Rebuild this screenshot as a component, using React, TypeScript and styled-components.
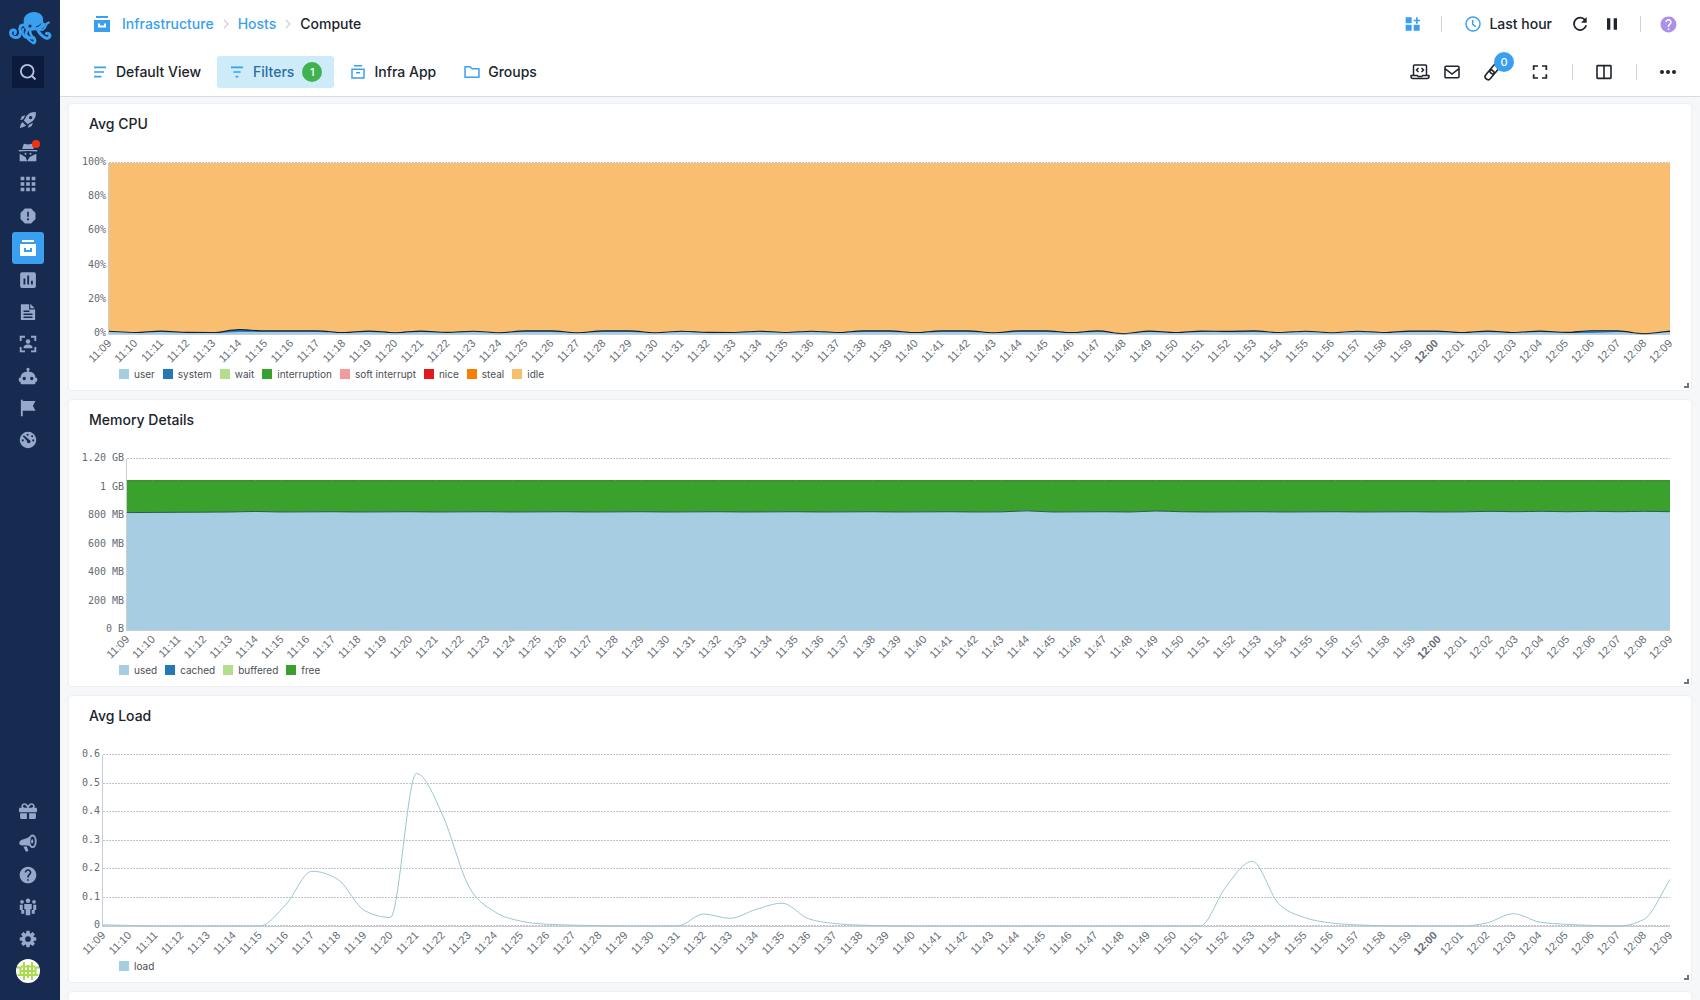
import React, { useLayoutEffect, useRef, useState } from "react";
import styled, { createGlobalStyle, css } from "styled-components";
import { MdApps, MdHelp, MdReport, MdPause } from "react-icons/md";
import { FaGift } from "react-icons/fa";

const color = {
  navy: "#172b50",
  navyDark: "#0c1b3d",
  navIcon: "#97a8cc",
  blue: "#3a9fef",
  page: "#f5f7f9",
  text: "#20242b",
  muted: "#656b75",
  line: "#d8dbdf",
};

const GlobalStyle = createGlobalStyle`
  * { box-sizing: border-box; }
  body {
    margin: 0;
    background: ${color.page};
    color: ${color.text};
    font-family: Inter, "Liberation Sans", sans-serif;
    font-size: 14px;
    line-height: 16px;
  }
  button { font: inherit; color: inherit; border: 0; background: none; padding: 0; cursor: pointer; }
  a { color: inherit; text-decoration: none; }
`;

const Shell = styled.div`
  display: flex;
  height: 100vh;
  overflow: hidden;
`;

const Sidebar = styled.nav`
  display: flex;
  flex-direction: column;
  flex: none;
  width: 60px;
  padding: 12px 16px 13px 12px;
  background: ${color.navy};
`;

const LogoLink = styled.a`
  display: block;
  height: 32px;
  margin: 0 -8px 12px -4px;
`;

const SearchButton = styled.button`
  display: grid;
  place-items: center;
  flex: none;
  height: 32px;
  margin-bottom: 16px;
  background: ${color.navyDark};
  color: #b4c0dc;
`;

const NavLink = styled.a<{ $active?: boolean }>`
  position: relative;
  display: grid;
  place-items: center;
  flex: none;
  height: 32px;
  border-radius: 3px;
  color: ${(p) => (p.$active ? "#fff" : color.navIcon)};
  background: ${(p) => (p.$active ? color.blue : "transparent")};
`;

const AlertDot = styled.span`
  position: absolute;
  top: 4px;
  right: 4px;
  width: 8px;
  height: 8px;
  border-radius: 50%;
  background: #f0320f;
`;

const Spacer = styled.div`
  flex: 1;
`;

const Main = styled.div`
  display: flex;
  flex-direction: column;
  flex: 1;
  min-width: 0;
`;

const Header = styled.header`
  flex: none;
  background: #fff;
  border-bottom: 1px solid ${color.line};
`;

const Bar = styled.div`
  display: flex;
  align-items: center;
  height: 48px;
  padding: 0 16px 0 20px;
`;

const Breadcrumb = styled.div`
  display: flex;
  align-items: center;
  gap: 8px;
  padding-left: 14px;
  font-weight: 500;
`;

const CrumbIcon = styled.span`
  display: flex;
  margin-right: 4px;
  color: ${color.blue};
`;

const Crumb = styled.a`
  color: ${color.blue};
`;

const Chevron = styled.svg`
  width: 8px;
  height: 16px;
  fill: none;
  stroke: #cfd3d9;
  stroke-width: 1.4;
`;

const Tabs = styled.div`
  display: flex;
  gap: 4px;
`;

const TextButton = styled.button<{ $on?: boolean }>`
  display: flex;
  align-items: center;
  gap: 8px;
  height: 32px;
  padding: 0 12px;
  border-radius: 3px;
  font-weight: 500;
  svg { color: ${color.blue}; }
  ${(p) =>
    p.$on &&
    css`
      background: #cdebf8;
      color: #2c6da6;
    `}
`;

const countBadge = css`
  display: grid;
  place-items: center;
  width: 20px;
  height: 20px;
  border-radius: 50%;
  color: #fff;
  font-size: 11px;
  font-weight: 500;
`;

const Count = styled.span`
  ${countBadge}
  background: #3fb34f;
`;

const LinkCount = styled.span`
  ${countBadge}
  position: absolute;
  left: 18px;
  top: -4px;
  background: ${color.blue};
`;

const Actions = styled.div`
  display: flex;
  align-items: center;
  margin-left: auto;
`;

const IconButton = styled.button<{ $tint?: string; $spaced?: boolean }>`
  position: relative;
  display: grid;
  place-items: center;
  width: 32px;
  height: 32px;
  color: ${(p) => p.$tint ?? color.text};
  margin: ${(p) => (p.$spaced ? "0 16px 0 8px" : "0")};
`;

const Divider = styled.span<{ $wide?: boolean }>`
  width: 1px;
  height: 16px;
  margin: 0 ${(p) => (p.$wide ? 15 : 11)}px 0 ${(p) => (p.$wide ? 16 : 12)}px;
  background: #cfd2d6;
`;

const Panels = styled.main`
  display: flex;
  flex-direction: column;
  flex: 1;
  min-height: 0;
  gap: 10px;
  padding: 7px 9px 0;
  overflow: hidden;
`;

const Card = styled.section`
  position: relative;
  flex: none;
  min-height: 286px;
  background: #fff;
  border-radius: 3px;
  box-shadow: 0 0 2px rgba(30, 50, 80, 0.12);
`;

const CardTitle = styled.h2`
  margin: 0;
  padding: 0 20px;
  font-size: 14px;
  font-weight: 500;
  line-height: 40px;
`;

const ChartSvg = styled.svg`
  display: block;
  width: 100%;
  height: 223px;
`;

const YLabel = styled.text`
  fill: ${color.muted};
  font-family: "DejaVu Sans Mono", monospace;
  font-size: 10px;
  text-anchor: end;
`;

const XLabel = styled.text<{ $bold: boolean }>`
  fill: ${color.muted};
  font-family: "Liberation Sans", Arial, sans-serif;
  font-size: 11px;
  font-weight: ${(p) => (p.$bold ? 700 : 400)};
  text-anchor: end;
`;

const Legend = styled.ul`
  display: flex;
  gap: 8px;
  margin: 0;
  padding: 0 50px;
  list-style: none;
  font-size: 10px;
  line-height: 14px;
  color: #4a4e55;
`;

const LegendItem = styled.li<{ $color: string }>`
  display: flex;
  align-items: center;
  gap: 5px;
  &::before {
    content: "";
    width: 10px;
    height: 10px;
    background: ${(p) => p.$color};
  }
`;

const ResizeHandle = styled.span`
  position: absolute;
  right: 2px;
  bottom: 2px;
  width: 5px;
  height: 5px;
  border: solid #6e747c;
  border-width: 0 2px 2px 0;
`;

/* ---------- icons ---------- */

type IconProps = { size?: number; children: React.ReactNode; stroke?: number };

const Solid = ({ size = 18, children }: IconProps) => (
  <svg width={size} height={size} viewBox="0 0 24 24" fill="currentColor" aria-hidden="true">
    {children}
  </svg>
);

const Outline = ({ size = 18, stroke = 2, children }: IconProps) => (
  <svg width={size} height={size} viewBox="0 0 24 24" fill="none" stroke="currentColor" strokeWidth={stroke} aria-hidden="true">
    {children}
  </svg>
);

const OctopusLogo = () => (
  <svg width="44" height="34" viewBox="0 0 44 34" aria-hidden="true">
    <g fill="none" stroke={color.blue} strokeLinecap="round">
      <path strokeWidth="3" d="M19 13 Q15 12 12.500 14 Q11 17 12.500 20 Q12.500 26 7 25.500 Q2.500 24.500 2.500 20.500 Q3 17.500 6 18 Q8.500 19 7 21.500" />
      <path strokeWidth="2.800" d="M22 16 Q17 20 18 23 Q20 27 26 26 Q28 29 26 31" />
      <path strokeWidth="2.600" d="M22 17 Q22 24 26 26" />
      <path strokeWidth="3" d="M29 16 Q31 22 36 25 Q40 28 42 24 Q41.500 20.500 38.500 21.500" />
      <path strokeWidth="2" d="M30 17 Q36 20 38 13.500 Q38.500 11 41 10.500" />
      <path strokeWidth="2.200" d="M15 17 Q13 24 19 26 Q21 29 25 31" />
    </g>
    <path fill={color.blue} d="M16 12 C14 4 20 0 26 0 C32 0 36 4 35 9 Q35 12 38 11 Q37 17 30 18 L20 19 Q15 17 16 12Z" />
    <circle cx="22" cy="14" r="1.600" fill={color.navy} />
    <path d="M28 15 Q32 14 33 11.500" stroke={color.navy} fill="none" />
  </svg>
);

const RocketIcon = () => (
  <Solid>
    <path fillRule="evenodd" d="M22.500 1.500Q15 1 10.500 6L6.500 12.500 11.500 17.500 18 13.500Q23 9 22.500 1.500zM15.500 6.500a2.300 2.300 0 1 1 0 4.600a2.300 2.300 0 0 1 0-4.600z" />
    <path d="M8.500 5.500L4 7 1.500 12l4-1zM18.500 15.500L17 20 12 22.500l1-4z" />
    <path d="M4.500 14.500l5 5-3 1.500-5.500 2 1.500-5.500z" />
  </Solid>
);

const ArchiveSolid = ({ size = 24 }: { size?: number }) => (
  <svg width={size} height={size} viewBox="0 0 24 24" fill="currentColor" aria-hidden="true">
    <path d="M6 4h12v2H6z" />
    <path fillRule="evenodd" d="M4 8h16v12H4zM8 12v4h8v-4h-2v2h-4v-2z" />
  </svg>
);

const ArchiveOutline = () => (
  <Outline size={16} stroke={2.2}>
    <path d="M6 2.500h12M3 8h18v13H3zM9 13h6" />
  </Outline>
);

const SpyIcon = () => (
  <Solid size={20}>
    <path d="M7 2l5 1 5-1 2 6.500H5zM1 9.500h22v2q-11-1.500-22 0z" />
    <circle cx="9" cy="14" r="1.200" />
    <circle cx="15" cy="14" r="1.200" />
    <path d="M2 14l7 4 2 5H2zM22 14l-8 4-3 5h11z" />
  </Solid>
);

const PollIcon = () => (
  <Solid>
    <path fillRule="evenodd" d="M4 1.500h16a2.500 2.500 0 0 1 2.500 2.500v16a2.500 2.500 0 0 1-2.500 2.500H4A2.500 2.500 0 0 1 1.500 20V4A2.500 2.500 0 0 1 4 1.500zM6 10v8h2.500v-8zM11 6v12h2.500V6zM16 13v5h2.500v-5z" />
  </Solid>
);

const DocumentIcon = () => (
  <Solid>
    <path fillRule="evenodd" d="M2.500 1.500h11v7h8v14h-19zM6 10v2h8v-2zM6 14v2h12v-2zM6 18v2h12v-2z" />
    <path d="M15 1l6 6h-6z" />
  </Solid>
);

const ScanUserIcon = () => (
  <Solid>
    <path d="M1 1h7v2.500H3.500V8H1zM16 1h7v7h-2.500V3.500H16zM1 16h2.500v4.500H8V23H1zM20.500 16H23v7h-7v-2.500h4.500z" />
    <circle cx="12" cy="8.500" r="3" />
    <path d="M6 17.500q0-5 6-5t6 5z" />
  </Solid>
);

const RobotIcon = () => (
  <Solid size={20}>
    <path d="M12,2A2,2 0 0,1 14,4C14,4.740 13.600,5.390 13,5.730V7H14A7,7 0 0,1 21,14H22A1,1 0 0,1 23,15V18A1,1 0 0,1 22,19H21V20A2,2 0 0,1 19,22H5A2,2 0 0,1 3,20V19H2A1,1 0 0,1 1,18V15A1,1 0 0,1 2,14H3A7,7 0 0,1 10,7H11V5.730C10.400,5.390 10,4.740 10,4A2,2 0 0,1 12,2M7.500,13A2,2 0 0,0 5.500,15A2,2 0 0,0 9.500,15A2,2 0 0,0 7.500,13M16.500,13A2,2 0 0,0 14.500,15A2,2 0 0,0 18.500,15A2,2 0 0,0 16.500,13Z" />
  </Solid>
);

const FlagIcon = () => (
  <Solid>
    <path d="M2.500 1h2.500v1.500h17l-3.500 6.500 3.500 6.500H5V23H2.500z" />
  </Solid>
);

const GaugeIcon = () => (
  <Solid>
    <circle cx="12" cy="12" r="11" />
    <g fill={color.navy}>
      <circle cx="5" cy="12.500" r="1.400" />
      <circle cx="11.500" cy="5" r="1.400" />
      <circle cx="17.500" cy="7" r="1.400" />
      <circle cx="19" cy="12.500" r="1.400" />
      <circle cx="13" cy="14" r="2.400" />
      <path d="M5 7l1.500-1.500 7.500 6.500-2 2.500z" />
    </g>
  </Solid>
);

const MegaphoneIcon = () => (
  <Solid size={20}>
    <path d="M16 3Q11 7 4 8.500Q1 10 1.500 13q1 2.500 4 2Q12 14 17.500 17z" />
    <path d="M6.500 16.500l4-.5 2 5.500-3 1z" />
    <ellipse cx="17.500" cy="10" rx="3.800" ry="7" fill={color.navy} stroke="currentColor" strokeWidth="2.200" />
    <ellipse cx="17" cy="10" rx="1.300" ry="2.600" />
  </Solid>
);

const TeamIcon = () => (
  <Solid>
    <circle cx="12" cy="3.500" r="3" />
    <circle cx="4" cy="5" r="2.500" />
    <circle cx="20" cy="5" r="2.500" />
    <path d="M7 8h10v7h-2v8H9v-8H7zM1 9h4v7h2v5H3v-5H1zM19 9h4v7h-2v5h-4v-5h2z" />
  </Solid>
);

const GearIcon = () => (
  <Solid>
    {[0, 45, 90, 135].map((angle) => (
      <path key={angle} d="M10 1h4l1 5H9zM10 23h4l1-5H9z" transform={`rotate(${angle} 12 12)`} />
    ))}
    <circle cx="12" cy="12" r="5.800" fill="none" stroke="currentColor" strokeWidth="4" />
  </Solid>
);

const Avatar = () => (
  <svg width="24" height="24" viewBox="0 0 24 24" aria-hidden="true">
    <circle cx="12" cy="12" r="12" fill="#fff" />
    <path
      d="M8 3v18M12 6v13M16 3v18M4.500 8v8M19.500 8v8M1 8.500h4M19 8.500h4M5 7.500h14M5 12h14M5 16h14M1.500 16h4M18.500 16h4"
      fill="none"
      stroke="#a9dc4b"
      strokeWidth="2"
    />
  </svg>
);

const SearchIcon = () => (
  <Outline size={18} stroke={2.4}>
    <circle cx="11" cy="11" r="8.500" />
    <path d="M17 17l5 5" />
  </Outline>
);

const LinesIcon = () => (
  <Outline size={16} stroke={2.6}>
    <path d="M3 5h18M3 12h15M3 19h11" />
  </Outline>
);

const FilterIcon = () => (
  <Outline size={16} stroke={2.6}>
    <path d="M3 5h18M6.500 12h11M10 19h4" />
  </Outline>
);

const FolderIcon = () => (
  <Outline size={16} stroke={2.2}>
    <path d="M1.500 4h7.500l3 3h10.500v13h-21z" strokeLinejoin="round" />
  </Outline>
);

const WidgetsIcon = () => (
  <Solid size={16}>
    <path d="M1 2h9v9H1zM1 13h9v9H1zM13 13h9v9h-9zM16.500 2h2.500v3.500h3.500V8H19v3.500h-2.500V8H13V5.500h3.500z" />
  </Solid>
);

const ClockIcon = () => (
  <Outline size={16} stroke={2.2}>
    <circle cx="12" cy="12" r="10.500" />
    <path d="M11.500 5.500v7l4.500 3.500" />
  </Outline>
);

const RefreshIcon = () => (
  <Outline size={16} stroke={2.6}>
    <path d="M20 6.500A9.300 9.300 0 1 0 21.300 14" />
    <path d="M22 1.500v8.500h-8.500z" fill="currentColor" stroke="none" />
  </Outline>
);

const LaptopCodeIcon = () => (
  <svg width="20" height="16" viewBox="0 0 20 16" fill="none" stroke="currentColor" strokeWidth="1.500" aria-hidden="true">
    <path d="M3.500 11V2q0-1 1-1h11q1 0 1 1v9" />
    <path d="M1 11.500h6.500l.5 1h4l.5-1H19v1q0 2-2 2H3q-2 0-2-2z" strokeLinejoin="round" />
    <path d="M8.500 4L6.500 6l2 2M11.500 4l2 2-2 2" />
  </svg>
);

const MailIcon = () => (
  <Outline size={16} stroke={2.3}>
    <rect x="1.500" y="3.500" width="21" height="17" rx="1.500" />
    <path d="M1.500 7l10.500 8L22.500 7" />
  </Outline>
);

const ChainIcon = () => (
  <Outline size={18} stroke={2.2}>
    <g transform="rotate(-50 12 12)">
      <rect x="0" y="8" width="14" height="8" rx="4" />
      <rect x="10" y="8" width="14" height="8" rx="4" />
    </g>
  </Outline>
);

const FullscreenIcon = () => (
  <Outline size={16} stroke={2.6}>
    <path d="M2.500 9V3H9M15 3h6.500v6M21.500 15.500V21H15M9 21H2.500v-5.500" />
  </Outline>
);

const ColumnsIcon = () => (
  <Outline size={16} stroke={2.4}>
    <rect x="1.500" y="2.500" width="21" height="19" rx="1" />
    <path d="M12 2v20" />
  </Outline>
);

const DotsIcon = () => (
  <Solid size={16}>
    <circle cx="3" cy="12" r="3" />
    <circle cx="12" cy="12" r="3" />
    <circle cx="21" cy="12" r="3" />
  </Solid>
);

const CrumbChevron = () => (
  <Chevron viewBox="0 0 8 16" aria-hidden="true">
    <path d="M2 4l4 4-4 4" />
  </Chevron>
);

/* ---------- chart data ---------- */

const times = Array.from({ length: 61 }, (_, i) => {
  const minute = 11 * 60 + 9 + i;
  return `${Math.floor(minute / 60)}:${String(minute % 60).padStart(2, "0")}`;
});

const cpuBusy = [
  1.6, 0.8, 1.7, 0.9, 0.8, 2.6, 1.8, 1.8, 1.8, 0.8, 1.7, 0.7, 1.7, 0.9, 1.6, 0.7, 1.8, 1.8, 0.7, 1.8, 1.8, 0.7, 1.6,
  0.9, 0.8, 1.6, 0.8, 1.6, 0.8, 1.8, 1.8, 0.8, 1.8, 1.8, 0.7, 1.8, 1.8, 0.8, 1.8, 0.1, 1.7, 0.8, 1.7, 1.5, 1.8, 0.8,
  1.6, 0.7, 1.6, 0.8, 1.7, 1.7, 0.8, 1.7, 0.8, 1.7, 0.9, 1.9, 1.8, 0.1, 1.7,
];
const cpuUser = cpuBusy.map((v, i) => (i === 57 ? 0.6 : Math.min(v * 0.7, 1.2)));

const memoryUsed = times.map((_, i) =>
  i === 35 ? 836 : i === 40 ? 835 : i === 5 ? 832 : i < 5 ? 824 + i : i > 52 ? 830 + (i % 2) * 3 : 828 + (i % 3)
);

const load = times.map(() => 0);
const setLoad = (start: number, values: number[]) => values.forEach((v, i) => (load[start + i] = v));
setLoad(0, [0.004, 0.002]);
setLoad(7, [0.075, 0.192, 0.163, 0.055, 0.03, 0.535, 0.39, 0.14, 0.05, 0.017, 0.006, 0.003, 0.001]);
setLoad(23, [0.042, 0.027, 0.058, 0.08, 0.026, 0.009, 0.003, 0.001]);
setLoad(43, [0.138, 0.227, 0.08, 0.03, 0.011, 0.004, 0.001]);
setLoad(53, [0.011, 0.043, 0.014, 0.006, 0.002, 0, 0.023, 0.163]);

/* ---------- chart ---------- */

type Point = [number, number];

/** Monotone cubic path through the points, without the leading move command. */
function monotone(points: Point[]) {
  const n = points.length;
  const slope = points.slice(1).map((p, i) => (p[1] - points[i][1]) / (p[0] - points[i][0]));
  const tangent = points.map((_, i) => {
    if (i === 0) return slope[0];
    if (i === n - 1) return slope[n - 2];
    const a = slope[i - 1];
    const b = slope[i];
    return a * b <= 0 ? 0 : Math.sign(a) * Math.min(Math.abs(a), Math.abs(b), Math.abs(a + b) / 4) * 2;
  });
  let d = "";
  for (let i = 1; i < n; i++) {
    const [x0, y0] = points[i - 1];
    const [x1, y1] = points[i];
    const h = (x1 - x0) / 3;
    d += `C${x0 + h} ${y0 + tangent[i - 1] * h} ${x1 - h} ${y1 - tangent[i] * h} ${x1} ${y1}`;
  }
  return d;
}

type Series = { values: number[]; fill?: string; stroke: string; strokeWidth: number };

type ChartProps = {
  label: string;
  yLabels: string[];
  max: number;
  left: number;
  series: Series[];
};

const TOP = 19;
const PLOT = 171;
const RIGHT = 21;

function Chart({ label, yLabels, max, left, series }: ChartProps) {
  const ref = useRef<SVGSVGElement>(null);
  const [width, setWidth] = useState(0);

  useLayoutEffect(() => {
    const node = ref.current;
    if (!node) return;
    const measure = () => setWidth(node.getBoundingClientRect().width);
    measure();
    const observer = new ResizeObserver(measure);
    observer.observe(node);
    return () => observer.disconnect();
  }, []);

  const right = Math.max(width - RIGHT, left + 1);
  const bottom = TOP + PLOT;
  const x = (i: number) => left + ((right - left) * i) / (times.length - 1);
  const y = (v: number) => bottom - (v / max) * PLOT;

  return (
    <ChartSvg ref={ref} role="img" aria-label={label}>
      {yLabels.map((text, i) => {
        const at = Math.round(bottom - (PLOT * i) / (yLabels.length - 1));
        return (
          <g key={text}>
            <line x1={left} x2={right} y1={at - 0.5} y2={at - 0.5} stroke="#c0c3c7" strokeDasharray="2 1" />
            <YLabel x={left - 3} y={at + 2}>
              {text}
            </YLabel>
          </g>
        );
      })}
      {series.map((s, i) => {
        const points = s.values.map((v, k): Point => [x(k), y(v)]);
        const start = `M${points[0][0]} ${points[0][1]}`;
        const curve = monotone(points);
        return (
          <g key={i}>
            {s.fill && <path d={`${start}${curve}V${bottom}H${left}Z`} fill={s.fill} />}
            <path d={start + curve} fill="none" stroke={s.stroke} strokeWidth={s.strokeWidth} />
          </g>
        );
      })}
      <path d={`M${left - 0.5} ${TOP}V${bottom + 0.5}H${right}`} fill="none" stroke="#b4b8be" strokeOpacity="0.7" />
      {times.map((t, i) => (
        <XLabel key={t} $bold={t === "12:00"} transform={`translate(${x(i) + 3} ${bottom + 10}) rotate(-45)`}>
          {t}
        </XLabel>
      ))}
    </ChartSvg>
  );
}

type PanelProps = ChartProps & { legend: [string, string][] };

const Panel = ({ legend, ...chart }: PanelProps) => (
  <Card>
    <CardTitle>{chart.label}</CardTitle>
    <Chart {...chart} />
    <Legend>
      {legend.map(([name, swatch]) => (
        <LegendItem key={name} $color={swatch}>
          {name}
        </LegendItem>
      ))}
    </Legend>
    <ResizeHandle />
  </Card>
);

const panels: PanelProps[] = [
  {
    label: "Avg CPU",
    yLabels: ["0%", "20%", "40%", "60%", "80%", "100%"],
    max: 100,
    left: 40,
    series: [
      { values: times.map(() => 100), fill: "#f9be70", stroke: "none", strokeWidth: 0 },
      { values: cpuBusy, fill: "#2f80c2", stroke: "#14202b", strokeWidth: 1.2 },
      { values: cpuUser, fill: "#9fcdec", stroke: "none", strokeWidth: 0 },
    ],
    legend: [
      ["user", "#a6cee0"],
      ["system", "#2677b5"],
      ["wait", "#b3df8a"],
      ["interruption", "#37a02e"],
      ["soft interrupt", "#f39b9b"],
      ["nice", "#e3191c"],
      ["steal", "#f78004"],
      ["idle", "#f7be6e"],
    ],
  },
  {
    label: "Memory Details",
    yLabels: ["0 B", "200 MB", "400 MB", "600 MB", "800 MB", "1 GB", "1.20 GB"],
    max: 1200,
    left: 58,
    series: [
      { values: times.map(() => 1048), fill: "#39a12c", stroke: "#2a7a22", strokeWidth: 1 },
      { values: memoryUsed, fill: "#a6cde2", stroke: "#2b5a5c", strokeWidth: 1 },
    ],
    legend: [
      ["used", "#a6cee0"],
      ["cached", "#2677b5"],
      ["buffered", "#b3df8a"],
      ["free", "#37a02e"],
    ],
  },
  {
    label: "Avg Load",
    yLabels: ["0", "0.1", "0.2", "0.3", "0.4", "0.5", "0.6"],
    max: 0.6,
    left: 34,
    series: [{ values: load, stroke: "#9ac7d2", strokeWidth: 1 }],
    legend: [["load", "#a6cee0"]],
  },
];

export default function App() {
  return (
    <>
      <GlobalStyle />
      <Shell>
        <Sidebar aria-label="Main">
          <LogoLink href="#home" aria-label="Home"><OctopusLogo /></LogoLink>
          <SearchButton aria-label="Search"><SearchIcon /></SearchButton>
          <NavLink href="#start" aria-label="Get started"><RocketIcon /></NavLink>
          <NavLink href="#discover" aria-label="Discovery"><SpyIcon /><AlertDot /></NavLink>
          <NavLink href="#apps" aria-label="Apps"><MdApps size={22} /></NavLink>
          <NavLink href="#alerts" aria-label="Alerts"><MdReport size={20} /></NavLink>
          <NavLink href="#infra" aria-label="Infrastructure" $active><ArchiveSolid /></NavLink>
          <NavLink href="#dashboards" aria-label="Dashboards"><PollIcon /></NavLink>
          <NavLink href="#logs" aria-label="Logs"><DocumentIcon /></NavLink>
          <NavLink href="#experience" aria-label="Experience"><ScanUserIcon /></NavLink>
          <NavLink href="#synthetics" aria-label="Synthetics"><RobotIcon /></NavLink>
          <NavLink href="#events" aria-label="Events"><FlagIcon /></NavLink>
          <NavLink href="#metrics" aria-label="Metrics"><GaugeIcon /></NavLink>
          <Spacer />
          <NavLink href="#gifts" aria-label="Invite"><FaGift size={18} /></NavLink>
          <NavLink href="#news" aria-label="News"><MegaphoneIcon /></NavLink>
          <NavLink href="#help" aria-label="Help"><MdHelp size={20} /></NavLink>
          <NavLink href="#team" aria-label="Team"><TeamIcon /></NavLink>
          <NavLink href="#settings" aria-label="Settings"><GearIcon /></NavLink>
          <NavLink href="#account" aria-label="Account"><Avatar /></NavLink>
        </Sidebar>
        <Main>
          <Header>
            <Bar>
              <Breadcrumb>
                <CrumbIcon>
                  <svg width="16" height="16" viewBox="4 4 16 16" fill="currentColor" aria-hidden="true">
                    <path d="M6 4h12v2H6z" />
                    <path fillRule="evenodd" d="M4 8h16v12H4zM8 11.500v4h8v-4h-2v2h-4v-2z" />
                  </svg>
                </CrumbIcon>
                <Crumb href="#infra">Infrastructure</Crumb>
                <CrumbChevron />
                <Crumb href="#hosts">Hosts</Crumb>
                <CrumbChevron />
                <span>Compute</span>
              </Breadcrumb>
              <Actions>
                <IconButton aria-label="Add widget" $tint={color.blue}><WidgetsIcon /></IconButton>
                <Divider />
                <TextButton><ClockIcon />Last hour</TextButton>
                <IconButton aria-label="Refresh"><RefreshIcon /></IconButton>
                <IconButton aria-label="Pause"><MdPause size={20} /></IconButton>
                <Divider />
                <IconButton aria-label="Help" $tint="#ab8fe8"><MdHelp size={19} /></IconButton>
              </Actions>
            </Bar>
            <Bar>
              <Tabs>
                <TextButton><LinesIcon />Default View</TextButton>
                <TextButton $on><FilterIcon />Filters<Count>1</Count></TextButton>
                <TextButton><ArchiveOutline />Infra App</TextButton>
                <TextButton><FolderIcon />Groups</TextButton>
              </Tabs>
              <Actions>
                <IconButton aria-label="Embed"><LaptopCodeIcon /></IconButton>
                <IconButton aria-label="Email"><MailIcon /></IconButton>
                <IconButton aria-label="Links" $spaced><ChainIcon /><LinkCount>0</LinkCount></IconButton>
                <IconButton aria-label="Full screen"><FullscreenIcon /></IconButton>
                <Divider $wide />
                <IconButton aria-label="Columns"><ColumnsIcon /></IconButton>
                <Divider $wide />
                <IconButton aria-label="More"><DotsIcon /></IconButton>
              </Actions>
            </Bar>
          </Header>
          <Panels>
            {panels.map((panel) => (
              <Panel key={panel.label} {...panel} />
            ))}
            <Card />
          </Panels>
        </Main>
      </Shell>
    </>
  );
}
